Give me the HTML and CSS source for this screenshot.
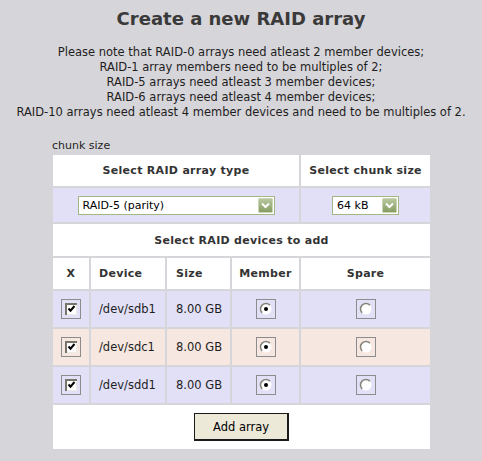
FILE: index.html
```html
<!DOCTYPE html>
<html>
<head>
<meta charset="utf-8">
<title>Create a new RAID array</title>
<link rel="stylesheet" href="styles.css">
</head>
<body>
<h1 class="title">Create a new RAID array</h1>
<p class="notes">Please note that RAID-0 arrays need atleast 2 member devices;<br>RAID-1 array members need to be multiples of 2;<br>RAID-5 arrays need atleast 3 member devices;<br>RAID-6 arrays need atleast 4 member devices;<br>RAID-10 arrays need atleast 4 member devices and need to be multiples of 2.</p>
<div class="caption">chunk size</div>
<table class="raid">
  <colgroup>
    <col class="c-x"><col class="c-dev"><col class="c-size"><col class="c-mem"><col class="c-spare">
  </colgroup>
  <tr class="r-head">
    <th colspan="4">Select RAID array type</th>
    <th>Select chunk size</th>
  </tr>
  <tr class="r-sel lav">
    <td colspan="4" class="center">
      <span class="select sel-type"><span class="sel-text">RAID-5 (parity)</span><span class="sel-btn"><svg width="15" height="15" viewBox="0 0 15 15"><defs><linearGradient id="g1" x1="0" y1="0" x2="0" y2="1"><stop offset="0" stop-color="#b9c99f"/><stop offset="1" stop-color="#869c62"/></linearGradient></defs><rect x="0.5" y="0.5" width="14" height="14" rx="1" fill="url(#g1)" stroke="#c9d5b5"/><path d="M4 5.5l3.5 3.5 3.5-3.5" fill="none" stroke="#fff" stroke-width="2"/></svg></span></span>
    </td>
    <td class="center">
      <span class="select sel-chunk"><span class="sel-text">64 kB</span><span class="sel-btn"><svg width="15" height="15" viewBox="0 0 15 15"><defs><linearGradient id="g2" x1="0" y1="0" x2="0" y2="1"><stop offset="0" stop-color="#b9c99f"/><stop offset="1" stop-color="#869c62"/></linearGradient></defs><rect x="0.5" y="0.5" width="14" height="14" rx="1" fill="url(#g2)" stroke="#c9d5b5"/><path d="M4 5.5l3.5 3.5 3.5-3.5" fill="none" stroke="#fff" stroke-width="2"/></svg></span></span>
    </td>
  </tr>
  <tr class="r-sub">
    <th colspan="5">Select RAID devices to add</th>
  </tr>
  <tr class="r-cols">
    <th class="center">X</th>
    <th class="left pad-dev">Device</th>
    <th class="left pad-size">Size</th>
    <th class="center">Member</th>
    <th class="center">Spare</th>
  </tr>
  <tr class="r-dev lav">
    <td class="center"><svg class="ctl" width="20" height="20" viewBox="0 0 20 20"><rect x="0.5" y="0.5" width="19" height="19" fill="none" stroke="#8c8c8c"/><rect x="4" y="4" width="12" height="12" fill="#fff"/><path d="M15.5 4v11.5H4" fill="none" stroke="#ecebe6"/><path d="M5 16V5h11" fill="none" stroke="#77756a" stroke-width="2"/><path d="M7.5 9.5l2 2.2 4-4.7" fill="none" stroke="#000" stroke-width="2"/></svg></td>
    <td class="left pad-dev data">/dev/sdb1</td>
    <td class="left pad-size data">8.00 GB</td>
    <td class="center"><svg class="ctl" width="20" height="20" viewBox="0 0 20 20"><rect x="0.5" y="0.5" width="19" height="19" fill="none" stroke="#8c8c8c"/><circle cx="10" cy="10" r="5.5" fill="#fff"/><path d="M6.1 13.9A5.5 5.5 0 0 1 13.9 6.1" fill="none" stroke="#85837a" stroke-width="1.5"/><circle cx="10" cy="10" r="2" fill="#000"/></svg></td>
    <td class="center"><svg class="ctl" width="20" height="20" viewBox="0 0 20 20"><rect x="0.5" y="0.5" width="19" height="19" fill="none" stroke="#8c8c8c"/><circle cx="10" cy="10" r="5.5" fill="#fff"/><path d="M6.1 13.9A5.5 5.5 0 0 1 13.9 6.1" fill="none" stroke="#85837a" stroke-width="1.5"/></svg></td>
  </tr>
  <tr class="r-dev peach">
    <td class="center"><svg class="ctl" width="20" height="20" viewBox="0 0 20 20"><rect x="0.5" y="0.5" width="19" height="19" fill="none" stroke="#8c8c8c"/><rect x="4" y="4" width="12" height="12" fill="#fff"/><path d="M15.5 4v11.5H4" fill="none" stroke="#ecebe6"/><path d="M5 16V5h11" fill="none" stroke="#77756a" stroke-width="2"/><path d="M7.5 9.5l2 2.2 4-4.7" fill="none" stroke="#000" stroke-width="2"/></svg></td>
    <td class="left pad-dev data">/dev/sdc1</td>
    <td class="left pad-size data">8.00 GB</td>
    <td class="center"><svg class="ctl" width="20" height="20" viewBox="0 0 20 20"><rect x="0.5" y="0.5" width="19" height="19" fill="none" stroke="#8c8c8c"/><circle cx="10" cy="10" r="5.5" fill="#fff"/><path d="M6.1 13.9A5.5 5.5 0 0 1 13.9 6.1" fill="none" stroke="#85837a" stroke-width="1.5"/><circle cx="10" cy="10" r="2" fill="#000"/></svg></td>
    <td class="center"><svg class="ctl" width="20" height="20" viewBox="0 0 20 20"><rect x="0.5" y="0.5" width="19" height="19" fill="none" stroke="#8c8c8c"/><circle cx="10" cy="10" r="5.5" fill="#fff"/><path d="M6.1 13.9A5.5 5.5 0 0 1 13.9 6.1" fill="none" stroke="#85837a" stroke-width="1.5"/></svg></td>
  </tr>
  <tr class="r-dev lav">
    <td class="center"><svg class="ctl" width="20" height="20" viewBox="0 0 20 20"><rect x="0.5" y="0.5" width="19" height="19" fill="none" stroke="#8c8c8c"/><rect x="4" y="4" width="12" height="12" fill="#fff"/><path d="M15.5 4v11.5H4" fill="none" stroke="#ecebe6"/><path d="M5 16V5h11" fill="none" stroke="#77756a" stroke-width="2"/><path d="M7.5 9.5l2 2.2 4-4.7" fill="none" stroke="#000" stroke-width="2"/></svg></td>
    <td class="left pad-dev data">/dev/sdd1</td>
    <td class="left pad-size data">8.00 GB</td>
    <td class="center"><svg class="ctl" width="20" height="20" viewBox="0 0 20 20"><rect x="0.5" y="0.5" width="19" height="19" fill="none" stroke="#8c8c8c"/><circle cx="10" cy="10" r="5.5" fill="#fff"/><path d="M6.1 13.9A5.5 5.5 0 0 1 13.9 6.1" fill="none" stroke="#85837a" stroke-width="1.5"/><circle cx="10" cy="10" r="2" fill="#000"/></svg></td>
    <td class="center"><svg class="ctl" width="20" height="20" viewBox="0 0 20 20"><rect x="0.5" y="0.5" width="19" height="19" fill="none" stroke="#8c8c8c"/><circle cx="10" cy="10" r="5.5" fill="#fff"/><path d="M6.1 13.9A5.5 5.5 0 0 1 13.9 6.1" fill="none" stroke="#85837a" stroke-width="1.5"/></svg></td>
  </tr>
  <tr class="r-btn">
    <td colspan="5" class="center"><button class="btn" type="button">Add array</button></td>
  </tr>
</table>
</body>
</html>
```

FILE: styles.css
```css
html, body {
  margin: 0;
  padding: 0;
  background: #d6d5d9;
}
body {
  font-family: "DejaVu Sans", Verdana, sans-serif;
  font-size: 11px;
  color: #1e1e1e;
}
.title {
  margin: 8px 0 0;
  font-size: 18px;
  line-height: 22px;
  font-weight: bold;
  text-align: center;
  color: #3a3a3a;
}
.notes {
  margin: 15px 0 0;
  font-size: 11.5px;
  line-height: 15px;
  text-align: center;
  color: #1e1e1e;
}
.caption {
  margin: 19px 0 0 52px;
  line-height: 14px;
  font-size: 11px;
  color: #1e1e1e;
}
.raid {
  margin-left: 51px;
  width: 381px;
  table-layout: fixed;
  border-collapse: separate;
  border-spacing: 2px;
}
.c-x { width: 36px; }
.c-dev { width: 74px; }
.c-size { width: 63px; }
.c-mem { width: 67px; }
.c-spare { width: 129px; }
.raid th, .raid td {
  padding: 0;
  background: #fff;
  vertical-align: middle;
  box-sizing: border-box;
  font-size: 11px;
}
.raid th {
  font-weight: bold;
  color: #333;
  letter-spacing: 0.3px;
}
.raid td {
  color: #1e1e1e;
}
.raid td.data { font-size: 11.5px; }
.raid .lav td { background: #e2e0f6; }
.raid .peach td { background: #f6e7e0; }
.r-head th { height: 31px; text-align: center; }
.r-sel td { height: 34px; }
.r-sub th { height: 32px; text-align: center; }
.r-cols th { height: 31px; }
.r-dev td { height: 36px; }
.r-btn td { height: 44px; }
.center { text-align: center; }
.raid .left { text-align: left; }
.pad-dev { padding-left: 8px !important; }
.pad-size { padding-left: 9px !important; }
.ctl { display: block; margin: 0 auto; }
.select {
  display: inline-flex;
  align-items: center;
  box-sizing: border-box;
  height: 19px;
  border: 1px solid #a2b783;
  background: #fff;
  padding: 0 1px 0 0;
  vertical-align: middle;
  text-align: left;
}
.sel-type { width: 197px; }
.sel-chunk { width: 67px; }
.sel-text {
  flex: 1;
  padding-left: 4px;
  font-size: 11px;
  color: #000;
  line-height: 15px;
  white-space: nowrap;
}
.sel-btn {
  display: block;
  width: 15px;
  height: 15px;
}
.sel-btn svg { display: block; }
.btn {
  box-sizing: border-box;
  width: 95px;
  height: 28px;
  border: 2px solid #1a1a1a;
  border-width: 1px 2px 2px 1px;
  background: #ece9d9;
  font-family: "DejaVu Sans", Verdana, sans-serif;
  font-size: 11.5px;
  color: #000;
  padding: 0;
}
```
